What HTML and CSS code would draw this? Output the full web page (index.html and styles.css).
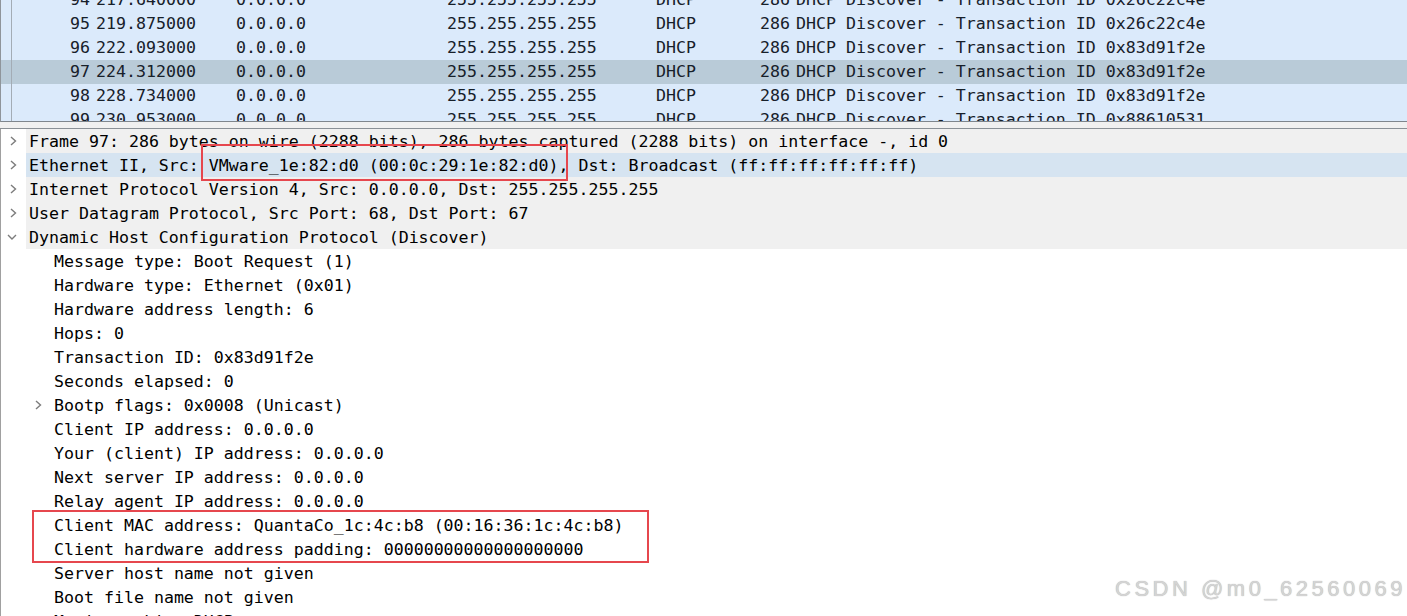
FILE: index.html
```html
<!DOCTYPE html>
<html lang="en">
<head>
    <meta charset="UTF-8">
    <meta name="viewport" content="width=device-width, initial-scale=1.0">
    <title>DHCP Discover</title>
    <link rel="stylesheet" href="styles.css">
</head>
<body>
    <div class="window">
        <div class="packet-list">
            <div class="packet-rows">
                <div class="packet">
                    <span class="mark"></span><span class="num">94</span><span>217.640000</span><span>0.0.0.0</span><span>255.255.255.255</span><span>DHCP</span><span class="len">286</span><span>DHCP Discover - Transaction ID 0x26c22c4e</span>
                </div>
                <div class="packet">
                    <span class="mark"></span><span class="num">95</span><span>219.875000</span><span>0.0.0.0</span><span>255.255.255.255</span><span>DHCP</span><span class="len">286</span><span>DHCP Discover - Transaction ID 0x26c22c4e</span>
                </div>
                <div class="packet">
                    <span class="mark"></span><span class="num">96</span><span>222.093000</span><span>0.0.0.0</span><span>255.255.255.255</span><span>DHCP</span><span class="len">286</span><span>DHCP Discover - Transaction ID 0x83d91f2e</span>
                </div>
                <div class="packet selected">
                    <span class="mark"></span><span class="num">97</span><span>224.312000</span><span>0.0.0.0</span><span>255.255.255.255</span><span>DHCP</span><span class="len">286</span><span>DHCP Discover - Transaction ID 0x83d91f2e</span>
                </div>
                <div class="packet">
                    <span class="mark"></span><span class="num">98</span><span>228.734000</span><span>0.0.0.0</span><span>255.255.255.255</span><span>DHCP</span><span class="len">286</span><span>DHCP Discover - Transaction ID 0x83d91f2e</span>
                </div>
                <div class="packet">
                    <span class="mark"></span><span class="num">99</span><span>230.953000</span><span>0.0.0.0</span><span>255.255.255.255</span><span>DHCP</span><span class="len">286</span><span>DHCP Discover - Transaction ID 0x88610531</span>
                </div>
            </div>
        </div>

        <div class="splitter"></div>

        <div class="details">
            <div class="node top">
                <span class="toggle"><svg class="arrow-right" viewBox="0 0 7 10"><polyline points="1,1 5.5,5 1,9"/></svg></span>
                <span class="label">Frame 97: 286 bytes on wire (2288 bits), 286 bytes captured (2288 bits) on interface -, id 0</span>
            </div>
            <div class="node top selected">
                <span class="toggle"><svg class="arrow-right" viewBox="0 0 7 10"><polyline points="1,1 5.5,5 1,9"/></svg></span>
                <span class="label">Ethernet II, Src: VMware_1e:82:d0 (00:0c:29:1e:82:d0), Dst: Broadcast (ff:ff:ff:ff:ff:ff)</span>
            </div>
            <div class="node top">
                <span class="toggle"><svg class="arrow-right" viewBox="0 0 7 10"><polyline points="1,1 5.5,5 1,9"/></svg></span>
                <span class="label">Internet Protocol Version 4, Src: 0.0.0.0, Dst: 255.255.255.255</span>
            </div>
            <div class="node top">
                <span class="toggle"><svg class="arrow-right" viewBox="0 0 7 10"><polyline points="1,1 5.5,5 1,9"/></svg></span>
                <span class="label">User Datagram Protocol, Src Port: 68, Dst Port: 67</span>
            </div>
            <div class="node top">
                <span class="toggle"><svg class="arrow-down" viewBox="0 0 10 6"><polyline points="1,1 5,5 9,1"/></svg></span>
                <span class="label">Dynamic Host Configuration Protocol (Discover)</span>
            </div>
            <div class="node child"><span class="toggle"></span><span class="label">Message type: Boot Request (1)</span></div>
            <div class="node child"><span class="toggle"></span><span class="label">Hardware type: Ethernet (0x01)</span></div>
            <div class="node child"><span class="toggle"></span><span class="label">Hardware address length: 6</span></div>
            <div class="node child"><span class="toggle"></span><span class="label">Hops: 0</span></div>
            <div class="node child"><span class="toggle"></span><span class="label">Transaction ID: 0x83d91f2e</span></div>
            <div class="node child"><span class="toggle"></span><span class="label">Seconds elapsed: 0</span></div>
            <div class="node child">
                <span class="toggle"><svg class="arrow-right" viewBox="0 0 7 10"><polyline points="1,1 5.5,5 1,9"/></svg></span>
                <span class="label">Bootp flags: 0x0008 (Unicast)</span>
            </div>
            <div class="node child"><span class="toggle"></span><span class="label">Client IP address: 0.0.0.0</span></div>
            <div class="node child"><span class="toggle"></span><span class="label">Your (client) IP address: 0.0.0.0</span></div>
            <div class="node child"><span class="toggle"></span><span class="label">Next server IP address: 0.0.0.0</span></div>
            <div class="node child"><span class="toggle"></span><span class="label">Relay agent IP address: 0.0.0.0</span></div>
            <div class="node child"><span class="toggle"></span><span class="label">Client MAC address: QuantaCo_1c:4c:b8 (00:16:36:1c:4c:b8)</span></div>
            <div class="node child"><span class="toggle"></span><span class="label">Client hardware address padding: 00000000000000000000</span></div>
            <div class="node child"><span class="toggle"></span><span class="label">Server host name not given</span></div>
            <div class="node child"><span class="toggle"></span><span class="label">Boot file name not given</span></div>
            <div class="node child"><span class="toggle"></span><span class="label">Magic cookie: DHCP</span></div>
        </div>

        <!-- annotation boxes drawn over the capture -->
        <div class="callout callout-src"></div>
        <div class="callout callout-mac"></div>

        <div class="watermark">CSDN @m0_62560069</div>
    </div>
</body>
</html>
```

FILE: styles.css
```css
body {
    margin: 0;
    background-color: #fff;
    font-family: "DejaVu Sans Mono", "Liberation Mono", monospace;
    font-size: 16.6px;
}
.window {
    position: relative;
    height: 616px;
    overflow: hidden;
}

/* packet list */
.packet-list {
    height: 121px;
    overflow: hidden;
    background-color: #dbeafb;
    border-left: 1px solid #8f959b;
    border-bottom: 1px solid #7f868d;
}
.packet-rows {
    margin-top: -12px; /* list is scrolled half a row */
}
.packet {
    display: grid;
    grid-template-columns: 11px 84px 140px 211px 209px 94px 46px 1fr;
    height: 24px;
    line-height: 24px;
    color: #17202a;
    white-space: nowrap;
}
.packet.selected {
    background-color: #b9cbd8;
}
.mark {
    border-right: 1px solid #a3acb5;
}
.num, .len {
    text-align: right;
    padding-right: 6px;
}

.splitter {
    height: 6px;
    background-color: #f0f0f0;
    border-bottom: 1px solid #8a9096;
}

/* packet details tree */
.details {
    border-left: 1px solid #a0a0a0;
}
.node {
    display: flex;
    height: 24px;
    line-height: 24px;
}
.toggle {
    width: 25px;
    flex: none;
    display: flex;
    align-items: center;
    justify-content: center;
}
.child .toggle {
    margin-left: 25px;
}
.label {
    flex: 1;
    box-sizing: border-box;
    padding-top: 1px;
    padding-left: 3px;
    color: #000;
    white-space: nowrap;
}
.top .label {
    background-color: #f0f0f0;
}
.node.selected .label {
    background-color: #d6e4f1;
}
.toggle svg {
    fill: none;
    stroke: #7c7c7c;
    stroke-width: 1.4;
}
.arrow-right {
    width: 7px;
    height: 10px;
}
.arrow-down {
    width: 10px;
    height: 6px;
    margin-left: -3px;
}

/* red annotation boxes */
.callout {
    position: absolute;
    box-sizing: border-box;
    border: 2px solid #e6474e;
}
.callout-src {
    left: 201px;
    top: 144px;
    width: 367px;
    height: 37px;
}
.callout-mac {
    left: 32px;
    top: 510px;
    width: 617px;
    height: 53px;
}

.watermark {
    position: absolute;
    right: 1px;
    top: 574px;
    font-family: "Liberation Sans", Arial, sans-serif;
    font-size: 22px;
    letter-spacing: 3.5px;
    line-height: 30px;
    color: #d4d4d4;
    text-shadow: 0 0 1px rgba(0, 0, 0, 0.35);
}
```
